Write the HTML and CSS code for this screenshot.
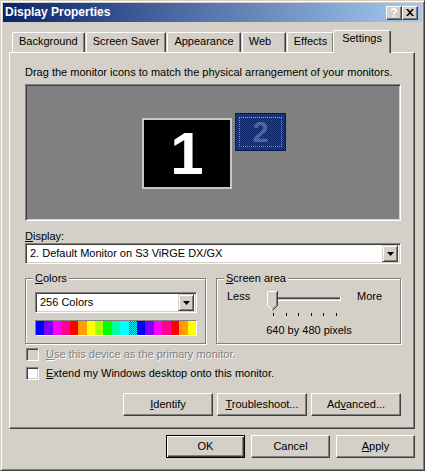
FILE: index.html
```html
<!DOCTYPE html>
<html lang="en">

<head>
    <meta charset="UTF-8">
    <meta name="viewport" content="width=device-width, initial-scale=1.0">
    <title>Display Properties</title>
    <link rel="stylesheet" href="styles.css">
</head>

<body>
    <div class="window">
        <div class="titlebar">
            <span class="title">Display Properties</span>
            <div class="caption-buttons">
                <button class="caption-btn">?</button>
                <button class="caption-btn">
                    <svg width="8" height="7" viewBox="0 0 8 7">
                        <path d="M0 0h2l2 2.2L6 0h2L5 3.5 8 7H6L4 4.8 2 7H0l3-3.5z" fill="#000" />
                    </svg>
                </button>
            </div>
        </div>

        <div class="dialog">
            <div class="tabs">
                <div class="tab">Background</div>
                <div class="tab">Screen Saver</div>
                <div class="tab">Appearance</div>
                <div class="tab">Web</div>
                <div class="tab">Effects</div>
                <div class="tab active">Settings</div>
            </div>

            <div class="panel">
                <p class="hint">Drag the monitor icons to match the physical arrangement of your monitors.</p>

                <div class="arrangement">
                    <div class="monitor monitor-one">1</div>
                    <div class="monitor monitor-two">
                        <span class="monitor-frame"></span>
                        <span class="monitor-number">2</span>
                    </div>
                </div>

                <div class="field-label"><u>D</u>isplay:</div>
                <div class="combo">
                    <span class="combo-text">2. Default Monitor on S3 ViRGE DX/GX</span>
                    <span class="combo-btn">
                        <svg width="7" height="4" viewBox="0 0 7 4"><path d="M0 0h7L3.5 4z" fill="#000" /></svg>
                    </span>
                </div>

                <div class="groups">
                    <fieldset class="group">
                        <legend><u>C</u>olors</legend>
                        <div class="combo">
                            <span class="combo-text">256 Colors</span>
                            <span class="combo-btn">
                                <svg width="7" height="4" viewBox="0 0 7 4"><path d="M0 0h7L3.5 4z" fill="#000" /></svg>
                            </span>
                        </div>
                        <div class="palette"></div>
                    </fieldset>

                    <fieldset class="group">
                        <legend><u>S</u>creen area</legend>
                        <div class="slider-row">
                            <span class="less">Less</span>
                            <svg class="slider" width="84" height="27" viewBox="0 0 84 27">
                                <rect x="8" y="7" width="71" height="1" fill="#808080" />
                                <rect x="8" y="8" width="1" height="3" fill="#808080" />
                                <rect x="9" y="8" width="69" height="1" fill="#404040" />
                                <rect x="8" y="10" width="71" height="1" fill="#fff" />
                                <rect x="78" y="7" width="1" height="4" fill="#fff" />
                                <polygon points="5,1 16,1 16,15.5 10.5,21 5,15.5" fill="#d4d0c8" />
                                <polyline points="5.5,16 5.5,1.5 15,1.5" stroke="#fff" fill="none" />
                                <polyline points="5.5,15.5 10.5,20.5" stroke="#fff" fill="none" />
                                <polyline points="15.5,1 15.5,15.5 10.5,20.5" stroke="#404040" fill="none" />
                                <polyline points="14.5,2 14.5,15 10.5,19" stroke="#808080" fill="none" />
                                <path d="M11.5 23v3M24.5 23v3M36.5 23v3M49.5 23v3M61.5 23v3M74.5 23v3" stroke="#000" />
                            </svg>
                            <span class="more">More</span>
                        </div>
                        <div class="resolution">640 by 480 pixels</div>
                    </fieldset>
                </div>

                <div class="checks">
                    <label class="check disabled">
                        <span class="box"></span>
                        <span><u>U</u>se this device as the primary monitor.</span>
                    </label>
                    <label class="check">
                        <span class="box"></span>
                        <span><u>E</u>xtend my Windows desktop onto this monitor.</span>
                    </label>
                </div>

                <div class="panel-buttons">
                    <button class="btn wide"><u>I</u>dentify</button>
                    <button class="btn wide"><u>T</u>roubleshoot...</button>
                    <button class="btn wide">Ad<u>v</u>anced...</button>
                </div>
            </div>

            <div class="dialog-buttons">
                <button class="btn default">OK</button>
                <button class="btn">Cancel</button>
                <button class="btn"><u>A</u>pply</button>
            </div>
        </div>
    </div>
</body>

</html>
```

FILE: styles.css
```css
* {
    box-sizing: border-box;
}

body {
    margin: 0;
    font-family: "Liberation Sans", Arial, sans-serif;
    font-size: 11px;
    line-height: 13px;
    color: #000;
    background: #d4d0c8;
}

button {
    font: inherit;
    color: inherit;
    padding: 0;
    margin: 0;
}

.window {
    width: 425px;
    height: 471px;
    display: flex;
    flex-direction: column;
    padding: 2px;
    background: #d4d0c8;
    border: 1px solid;
    border-color: #d4d0c8 #404040 #404040 #d4d0c8;
    box-shadow: inset 1px 1px #fff, inset -1px -1px #808080;
}

/* title bar */
.titlebar {
    height: 19px;
    display: flex;
    align-items: center;
    padding: 0 4px 0 2px;
    background: linear-gradient(to right, #0a246a, #a6caf0);
    color: #fff;
}

.title {
    font-weight: bold;
    font-size: 12px;
}

.caption-buttons {
    margin-left: auto;
    display: flex;
}

.caption-btn {
    width: 16px;
    height: 14px;
    display: flex;
    align-items: center;
    justify-content: center;
    background: #d4d0c8;
    border: 1px solid;
    border-color: #fff #404040 #404040 #fff;
    box-shadow: inset -1px -1px #808080;
    font-weight: bold;
    font-size: 12px;
    line-height: 12px;
}

/* dialog body */
.dialog {
    flex: 1;
    display: flex;
    flex-direction: column;
    padding: 8px 7px 0 6px;
}

.tabs {
    display: flex;
    align-items: flex-end;
    gap: 1px;
    height: 22px;
    padding-left: 3px;
}

.tab {
    height: 20px;
    min-width: 44px;
    padding: 2px 6px 0 6px;
    border-top: 1px solid #fff;
    border-left: 1px solid #fff;
    border-right: 1px solid #404040;
    border-radius: 2px 2px 0 0;
    box-shadow: inset -1px 0 #808080;
    white-space: nowrap;
}

.tab.active {
    position: relative;
    z-index: 2;
    height: 23px;
    margin: 0 -2px -1px -2px;
    padding: 1px 8px 0 8px;
    background: #d4d0c8;
}

.panel {
    height: 377px;
    padding: 13px 13px 12px 15px;
    border: 1px solid;
    border-color: #fff #404040 #404040 #fff;
    box-shadow: inset -1px -1px #808080;
}

.hint {
    margin: 0;
}

.arrangement {
    position: relative;
    height: 137px;
    margin-top: 5px;
    background: #808080;
    border: 1px solid;
    border-color: #808080 #fff #fff #808080;
    box-shadow: inset 1px 1px #404040, inset -1px -1px #d4d0c8;
}

.monitor {
    position: absolute;
}

.monitor-one {
    left: 116px;
    top: 33px;
    width: 90px;
    height: 71px;
    display: flex;
    align-items: center;
    justify-content: center;
    background: #000;
    border: 2px solid #c8c8c8;
    color: #fff;
    font-weight: bold;
    font-size: 60px;
    line-height: 60px;
}

.monitor-two {
    left: 209px;
    top: 28px;
    width: 51px;
    height: 38px;
    background-color: #0a246a;
    background-image: conic-gradient(#24408c 25%, #0a246a 0 50%, #24408c 0 75%, #0a246a 0);
    background-size: 2px 2px;
    border: 1px solid #0a1a50;
}

.monitor-frame {
    position: absolute;
    inset: 3px;
    border: 1px dotted #8a9ac4;
}

.monitor-number {
    position: absolute;
    inset: 0;
    display: flex;
    align-items: center;
    justify-content: center;
    font-weight: bold;
    font-size: 29px;
    color: rgba(170, 185, 220, 0.4);
}

.field-label {
    margin-top: 9px;
}

.combo {
    height: 21px;
    display: flex;
    align-items: center;
    padding: 2px;
    background: #fff;
    border: 1px solid;
    border-color: #808080 #fff #fff #808080;
    box-shadow: inset 1px 1px #404040, inset -1px -1px #d4d0c8;
}

.combo-text {
    flex: 1;
    padding-left: 2px;
    white-space: nowrap;
}

.combo-btn {
    width: 16px;
    height: 17px;
    display: flex;
    align-items: center;
    justify-content: center;
    background: #d4d0c8;
    border: 1px solid;
    border-color: #d4d0c8 #404040 #404040 #d4d0c8;
    box-shadow: inset 1px 1px #fff, inset -1px -1px #808080;
}

.groups {
    display: grid;
    grid-template-columns: 181px 1fr;
    gap: 10px;
    margin-top: 8px;
}

.group {
    margin: 0;
    min-width: 0;
    padding: 7px 8px 6px 9px;
    border: 1px solid #808080;
    box-shadow: inset 1px 1px #fff, 1px 1px #fff;
}

.group legend {
    padding: 0 2px;
    margin-left: -2px;
    background: #d4d0c8;
}

.palette {
    height: 16px;
    margin-top: 7px;
    border: 1px solid;
    border-color: #808080 #fff #fff #808080;
    background:
        linear-gradient(to right,
            #0000ff 0 5.26%, #8000ff 0 10.53%, #ff00ff 0 15.79%, #ff0090 0 21.05%,
            #ff0000 0 26.32%, #ffa000 0 31.58%, #ffff00 0 36.84%, #a8ff00 0 42.11%,
            #00ff00 0 47.37%, #00ffa0 0 52.63%, #00ffff 0 57.89%, transparent 0 63.16%,
            #0000ff 0 68.42%, #8000ff 0 73.68%, #ff00ff 0 78.95%, #ff0090 0 84.21%,
            #ff0000 0 89.47%, #ffa000 0 94.74%, #ffff00 0),
        conic-gradient(#00ffff 25%, #0060ff 0 50%, #00ffff 0 75%, #0060ff 0) 0 0 / 2px 2px;
}

.slider-row {
    display: flex;
    align-items: flex-start;
    margin-top: -2px;
}

.less {
    width: 36px;
    padding-left: 1px;
}

.slider {
    display: block;
}

.more {
    margin-left: 11px;
}

.resolution {
    margin-top: 7px;
    text-align: center;
}

.checks {
    margin-top: 1px;
}

.check {
    height: 19px;
    display: flex;
    align-items: center;
    gap: 7px;
    padding-left: 1px;
}

.box {
    width: 13px;
    height: 13px;
    background: #fff;
    border: 1px solid;
    border-color: #808080 #fff #fff #808080;
    box-shadow: inset 1px 1px #404040, inset -1px -1px #d4d0c8;
}

.check.disabled {
    color: #808080;
    text-shadow: 1px 1px #fff;
}

.check.disabled .box {
    background: #d4d0c8;
}

.panel-buttons {
    display: flex;
    justify-content: flex-end;
    gap: 4px;
    margin-top: 10px;
}

.btn {
    width: 79px;
    height: 23px;
    background: #d4d0c8;
    border: 1px solid;
    border-color: #fff #404040 #404040 #fff;
    box-shadow: inset -1px -1px #808080;
}

.btn.wide {
    width: 90px;
}

.btn.default {
    border-color: #000;
    box-shadow: inset 1px 1px #fff, inset -1px -1px #404040, inset -2px -2px #808080;
}

.dialog-buttons {
    display: flex;
    justify-content: flex-end;
    gap: 6px;
    margin-top: 6px;
}
```
